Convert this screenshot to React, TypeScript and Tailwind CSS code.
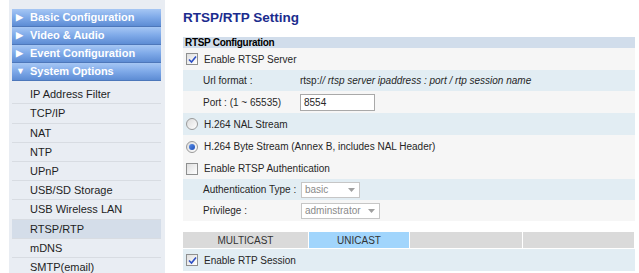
import React from "react";

const SECTIONS = ["Basic Configuration", "Video & Audio", "Event Configuration"];

const MENU_ITEMS = [
  "IP Address Filter",
  "TCP/IP",
  "NAT",
  "NTP",
  "UPnP",
  "USB/SD Storage",
  "USB Wireless LAN",
  "RTSP/RTP",
  "mDNS",
  "SMTP(email)",
];

function SectionHeader({ label, open }: { label: string; open?: boolean }) {
  return (
    <div className="flex h-[18px] items-center border-b border-[#4d77ba] bg-gradient-to-b from-[#a6c7f4] via-[#7ea9e8] to-[#5d8cd4] pl-[4px] text-[11px] font-bold text-white">
      <span className="w-[14px] text-[9px] leading-none">{open ? "▼" : "▶"}</span>
      <span>{label}</span>
    </div>
  );
}

function Checkbox({ checked }: { checked?: boolean }) {
  return (
    <span className="flex h-[12px] w-[12px] items-center justify-center border border-[#8e8f8f] bg-gradient-to-br from-[#dedede] to-white">
      {checked && (
        <svg width="9" height="9" viewBox="0 0 9 9">
          <path d="M1 4.5 L3.5 7 L8 1.5" fill="none" stroke="#2c4ec4" strokeWidth="1.6" />
        </svg>
      )}
    </span>
  );
}

function Radio({ checked }: { checked?: boolean }) {
  return (
    <span className="flex h-[12px] w-[12px] items-center justify-center rounded-full border border-[#9a9a9a] bg-gradient-to-br from-[#dcdcdc] to-white">
      {checked && <span className="h-[6px] w-[6px] rounded-full bg-gradient-to-br from-[#5a8ee8] to-[#1f4fb8]" />}
    </span>
  );
}

function Select({ value, width }: { value: string; width: string }) {
  return (
    <span className={`flex h-[16px] items-center justify-between border border-[#c6c6c6] bg-white pl-[3px] pr-[4px] text-[10px] text-[#8a8a8a] ${width}`}>
      <span>{value}</span>
      <svg width="7" height="4" viewBox="0 0 7 4">
        <path d="M0 0 H7 L3.5 4 Z" fill="#a0a0a0" />
      </svg>
    </span>
  );
}

function Row({ blue, h, children }: { blue?: boolean; h: string; children: React.ReactNode }) {
  return (
    <div className={`flex items-center whitespace-nowrap text-[10px] ${h} ${blue ? "bg-[#e2edf3]" : "bg-[#f6f6f6]"}`}>
      {children}
    </div>
  );
}

function Sidebar() {
  return (
    <aside className="ml-[9px] w-[156px] shrink-0 bg-[#e9edf3] pl-[3px] pr-[4px] pt-[9px]">
      {SECTIONS.map((s) => (
        <SectionHeader key={s} label={s} />
      ))}
      <SectionHeader label="System Options" open />
      <div className="pt-[4px]">
        {MENU_ITEMS.map((item, i) => (
          <div
            key={item}
            className={`flex items-center border-b border-[#d8dce2] pl-[18px] text-[11px] text-[#1e1e1e] ${
              i === 1 || i === 6 ? "h-[20px]" : "h-[19px]"
            } ${item === "RTSP/RTP" ? "bg-[#d4dde9]" : ""}`}
          >
            {item}
          </div>
        ))}
      </div>
    </aside>
  );
}

export default function App() {
  return (
    <div className="flex h-[273px] w-[639px] overflow-hidden bg-white font-['Liberation_Sans',Arial,sans-serif] text-[#262626]">
      <Sidebar />
      <main className="ml-[18px] w-[452px]">
        <h1 className="mt-[8px] h-[20px] text-[13.5px] font-bold text-[#1b2c8e]">RTSP/RTP Setting</h1>
        <div className="mt-[9px] flex h-[11px] items-center bg-[#d1ddeb] pl-[2px] text-[10px] font-bold leading-none tracking-[-0.3px] text-black">
          RTSP Configuration
        </div>
        <Row h="h-[22px]">
          <span className="ml-[3px] mr-[6px]"><Checkbox checked /></span>
          <span>Enable RTSP Server</span>
        </Row>
        <Row blue h="h-[21px]">
          <span className="ml-[20px] w-[97px] shrink-0">Url format :</span>
          <span>
            rtsp:/<i>/ rtsp server ipaddress : port / rtp session name</i>
          </span>
        </Row>
        <Row h="h-[22px]">
          <span className="ml-[20px] w-[97px] shrink-0">Port : (1 ~ 65535)</span>
          <span className="flex h-[17px] w-[75px] items-center border border-[#a9a9a9] bg-white pl-[3px]">8554</span>
        </Row>
        <Row blue h="h-[22px]">
          <span className="ml-[3px] mr-[6px]"><Radio /></span>
          <span>H.264 NAL Stream</span>
        </Row>
        <Row h="h-[23px]">
          <span className="ml-[3px] mr-[6px]"><Radio checked /></span>
          <span>H.264 Byte Stream (Annex B, includes NAL Header)</span>
        </Row>
        <Row h="h-[21px]">
          <span className="ml-[3px] mr-[6px]"><Checkbox /></span>
          <span>Enable RTSP Authentication</span>
        </Row>
        <Row blue h="h-[21px]">
          <span className="ml-[20px] w-[98px] shrink-0">Authentication Type :</span>
          <Select value="basic" width="w-[59px]" />
        </Row>
        <Row h="h-[21px]">
          <span className="ml-[20px] w-[98px] shrink-0">Privilege :</span>
          <Select value="adminstrator" width="w-[79px]" />
        </Row>
        <div className="mt-[11px] flex h-[17px] gap-px border-b border-white text-[10px] text-[#333]">
          <div className="flex w-[125px] items-center justify-center bg-[#dadada]">MULTICAST</div>
          <div className="flex w-[100px] items-center justify-center bg-[#a1d5fc]">UNICAST</div>
          <div className="w-[112px] bg-[#dadada]" />
          <div className="w-[111px] bg-[#dadada]" />
        </div>
        <Row blue h="h-[22px]">
          <span className="ml-[3px] mr-[6px]"><Checkbox checked /></span>
          <span>Enable RTP Session</span>
        </Row>
      </main>
    </div>
  );
}
